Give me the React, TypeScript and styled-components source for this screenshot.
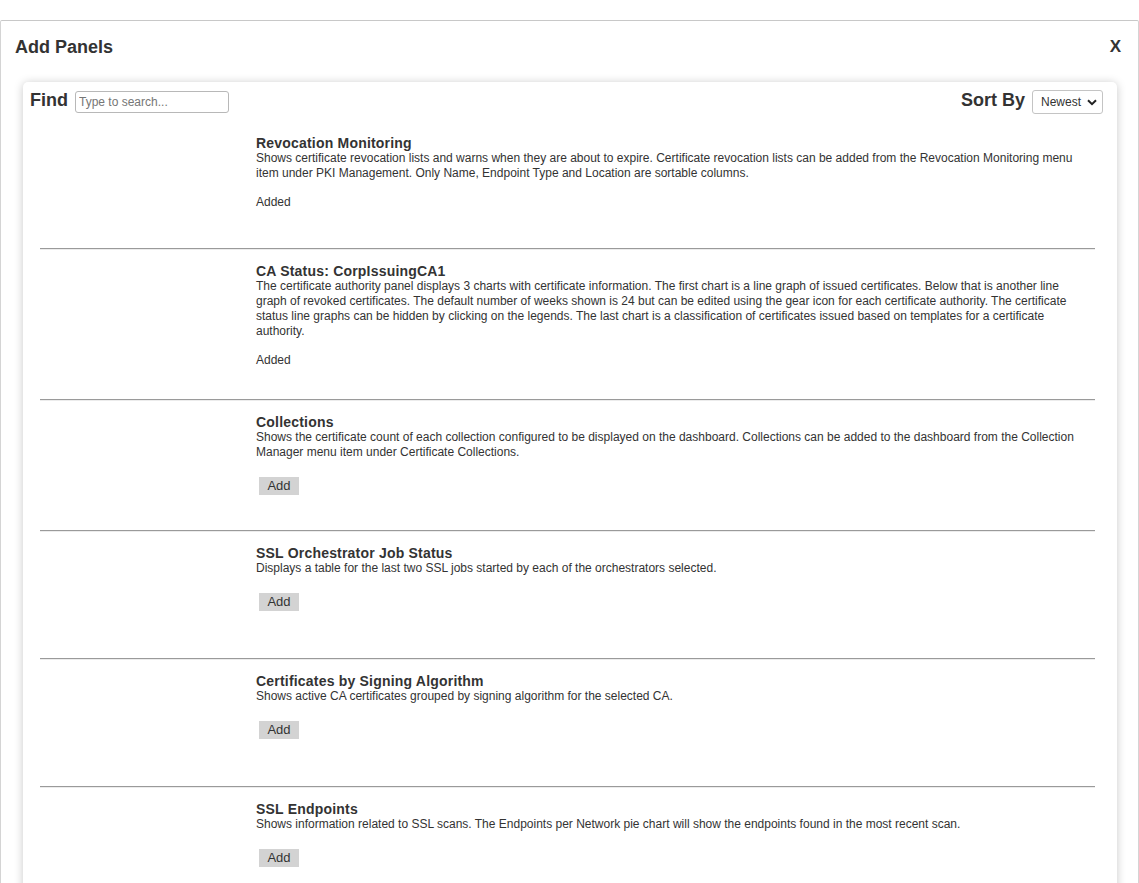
import React from "react";
import styled, { createGlobalStyle } from "styled-components";

const Global = createGlobalStyle`
  html, body {
    margin: 0;
    padding: 0;
    background: #ffffff;
    overflow: hidden;
  }
  body {
    font-family: "Liberation Sans", Arial, sans-serif;
    color: #333333;
  }
  * { box-sizing: border-box; }
`;

const Dialog = styled.div`
  margin-top: 20px;
  border-top: 1px solid #c8c8c8;
  border-left: 1px solid #d4d4d4;
  border-right: 1px solid #d4d4d4;
  border-radius: 2px 2px 0 0;
  padding: 0 21px 0 22px;
  min-height: 900px;
`;

const DialogHeader = styled.div`
  display: flex;
  justify-content: space-between;
  align-items: flex-start;
  padding: 15px 0 0 0;
  margin: 0 -4px 0 -8px;
  height: 61px;
`;

const DialogTitle = styled.h2`
  margin: 0;
  font-size: 18px;
  line-height: 22px;
  font-weight: bold;
  color: #333;
`;

const CloseButton = styled.button`
  border: none;
  background: none;
  padding: 0;
  font-family: "Liberation Sans", Arial, sans-serif;
  font-size: 17px;
  line-height: 22px;
  font-weight: bold;
  color: #333;
  cursor: pointer;
`;

const Card = styled.div`
  background: #ffffff;
  border-radius: 5px;
  box-shadow: 0 1px 10px rgba(0, 0, 0, 0.22);
`;

const Toolbar = styled.div`
  display: flex;
  justify-content: space-between;
  align-items: center;
  padding: 8px 14px 8px 7px;
`;

const ToolGroup = styled.div`
  display: flex;
  align-items: center;
  gap: 7px;
`;

const ToolLabel = styled.label`
  font-size: 18px;
  font-weight: bold;
  color: #333;
  line-height: 20px;
  position: relative;
  top: -2px;
`;

const SearchInput = styled.input`
  width: 154px;
  height: 22px;
  border: 1px solid #b8b8b8;
  border-radius: 3px;
  padding: 0 3px;
  font-family: "Liberation Sans", Arial, sans-serif;
  font-size: 12px;
  color: #333;
  &::placeholder {
    color: #767676;
  }
`;

const SelectWrap = styled.div`
  position: relative;
  width: 71px;
  height: 24px;
`;

const Select = styled.select`
  appearance: none;
  width: 100%;
  height: 100%;
  border: 1px solid #c4c4c4;
  border-radius: 3px;
  background: #fff;
  padding: 0 0 0 8px;
  font-family: "Liberation Sans", Arial, sans-serif;
  font-size: 12px;
  color: #333;
`;

const Chevron = styled.svg`
  position: absolute;
  right: 6px;
  top: 9px;
  pointer-events: none;
`;

const PanelList = styled.div`
  padding: 0 22px 0 17px;
`;

const PanelRow = styled.div`
  display: flex;
  padding: 13px 10px 31px 0;
`;

const Preview = styled.div`
  width: 216px;
  flex-shrink: 0;
`;

const PanelBody = styled.div`
  flex: 1;
  min-height: 82px;
`;

const PanelTitle = styled.div`
  font-size: 14px;
  line-height: 16px;
  font-weight: bold;
  letter-spacing: 0.2px;
  color: #333;
`;

const PanelText = styled.div`
  font-size: 12px;
  line-height: 15px;
  color: #333;
`;

const Actions = styled.div`
  display: flow-root;
  margin-top: 14px;
  font-size: 12px;
  line-height: 15px;
  color: #333;
`;

const AddButton = styled.button`
  display: block;
  margin: 3px 3px 4px;
  width: 40px;
  height: 18px;
  border: none;
  background: #d3d3d3;
  padding: 0;
  font-family: "Liberation Sans", Arial, sans-serif;
  font-size: 13px;
  line-height: 18px;
  color: #333;
  cursor: pointer;
`;

const Divider = styled.hr`
  margin: 0;
  height: 2px;
  border: none;
  border-top: 1px solid #9a9a9a;
  border-bottom: 1px solid #ececec;
`;

type Panel = {
  title: string;
  text: string;
  added: boolean;
};

const panels: Panel[] = [
  {
    title: "Revocation Monitoring",
    text: "Shows certificate revocation lists and warns when they are about to expire. Certificate revocation lists can be added from the Revocation Monitoring menu item under PKI Management. Only Name, Endpoint Type and Location are sortable columns.",
    added: true,
  },
  {
    title: "CA Status: CorpIssuingCA1",
    text: "The certificate authority panel displays 3 charts with certificate information. The first chart is a line graph of issued certificates. Below that is another line graph of revoked certificates. The default number of weeks shown is 24 but can be edited using the gear icon for each certificate authority. The certificate status line graphs can be hidden by clicking on the legends. The last chart is a classification of certificates issued based on templates for a certificate authority.",
    added: true,
  },
  {
    title: "Collections",
    text: "Shows the certificate count of each collection configured to be displayed on the dashboard. Collections can be added to the dashboard from the Collection Manager menu item under Certificate Collections.",
    added: false,
  },
  {
    title: "SSL Orchestrator Job Status",
    text: "Displays a table for the last two SSL jobs started by each of the orchestrators selected.",
    added: false,
  },
  {
    title: "Certificates by Signing Algorithm",
    text: "Shows active CA certificates grouped by signing algorithm for the selected CA.",
    added: false,
  },
  {
    title: "SSL Endpoints",
    text: "Shows information related to SSL scans. The Endpoints per Network pie chart will show the endpoints found in the most recent scan.",
    added: false,
  },
];

export default function App() {
  return (
    <>
      <Global />
      <Dialog>
        <DialogHeader>
          <DialogTitle>Add Panels</DialogTitle>
          <CloseButton>X</CloseButton>
        </DialogHeader>
        <Card>
          <Toolbar>
            <ToolGroup>
              <ToolLabel>Find</ToolLabel>
              <SearchInput placeholder="Type to search..." />
            </ToolGroup>
            <ToolGroup>
              <ToolLabel>Sort By</ToolLabel>
              <SelectWrap>
                <Select defaultValue="newest">
                  <option value="newest">Newest</option>
                  <option value="oldest">Oldest</option>
                  <option value="name">Name</option>
                </Select>
                <Chevron width="10" height="7" viewBox="0 0 10 7">
                  <path d="M1 1.2 L5 5.2 L9 1.2" fill="none" stroke="#222" strokeWidth="2" />
                </Chevron>
              </SelectWrap>
            </ToolGroup>
          </Toolbar>
          <PanelList>
            {panels.map((p, i) => (
              <React.Fragment key={p.title}>
                {i > 0 && <Divider />}
                <PanelRow>
                  <Preview />
                  <PanelBody>
                    <PanelTitle>{p.title}</PanelTitle>
                    <PanelText>{p.text}</PanelText>
                    <Actions>{p.added ? "Added" : <AddButton>Add</AddButton>}</Actions>
                  </PanelBody>
                </PanelRow>
              </React.Fragment>
            ))}
          </PanelList>
        </Card>
      </Dialog>
    </>
  );
}
